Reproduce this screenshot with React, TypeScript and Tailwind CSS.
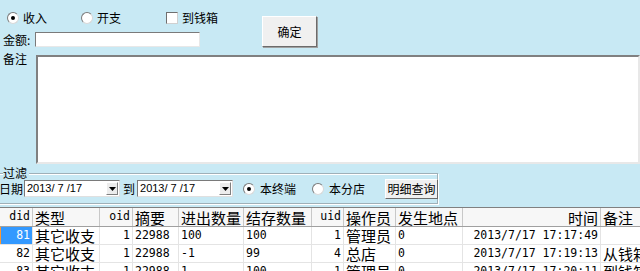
import React from "react";

const CJK = "font-['Noto_Sans_CJK_SC',sans-serif]";
const MONO = "font-['DejaVu_Sans_Mono','Noto_Sans_CJK_SC',monospace]";

function Radio({ checked }: { checked?: boolean }) {
  return (
    <span className="flex h-[12px] w-[12px] shrink-0 items-center justify-center rounded-full border border-t-[#7a7a7a] border-l-[#7a7a7a] border-r-[#d8d8d8] border-b-[#d8d8d8] bg-white">
      {checked && <span className="h-[4px] w-[4px] rounded-full bg-black" />}
    </span>
  );
}

function Check() {
  return (
    <span className="h-[12px] w-[12px] shrink-0 border border-t-[#6f6f6f] border-l-[#6f6f6f] border-r-[#d0d0d0] border-b-[#d0d0d0] bg-white" />
  );
}

function Combo({ value }: { value: string }) {
  return (
    <div className="flex h-[17px] w-[96px] shrink-0 items-center border border-t-[#7a7a7a] border-l-[#7a7a7a] border-r-[#e0e0e0] border-b-[#e0e0e0] bg-white pl-[2px]">
      <span className="flex-1 font-['Liberation_Sans',sans-serif] text-[11px] leading-none text-black">
        {value}
      </span>
      <span className="mr-[1px] flex h-[13px] w-[12px] items-center justify-center border border-t-white border-l-white border-r-[#808080] border-b-[#808080] bg-[#ececec]">
        <svg width="7" height="4" viewBox="0 0 7 4">
          <path d="M0 0h7L3.5 4z" fill="#000" />
        </svg>
      </span>
    </div>
  );
}

const cols = "grid-cols-[33px_67px_33px_46px_65px_68px_32px_52px_67px_138px_60px]";

type Cell = { t: string; right?: boolean; mono?: boolean };

const header: Cell[] = [
  { t: "did", right: true, mono: true },
  { t: "类型" },
  { t: "oid", right: true, mono: true },
  { t: "摘要" },
  { t: "进出数量" },
  { t: "结存数量" },
  { t: "uid", right: true, mono: true },
  { t: "操作员" },
  { t: "发生地点" },
  { t: "时间", right: true },
  { t: "备注" },
];

const rows = [
  ["81", "其它收支", "1", "22988", "100", "100", "1", "管理员", "0", "2013/7/17 17:17:49", ""],
  ["82", "其它收支", "1", "22988", "-1", "99", "4", "总店", "0", "2013/7/17 17:19:13", "从钱箱"],
  ["83", "其它收支", "1", "22988", "1", "100", "1", "管理员", "0", "2013/7/17 17:20:11", "到钱箱"],
];

const monoCol = [true, false, true, true, true, true, true, false, true, true, false];
const rightCol = [true, false, true, false, false, false, true, false, false, true, false];

export default function App() {
  return (
    <div className={`flex h-[271px] w-[640px] flex-col overflow-hidden bg-[#c8e9f4] text-[12px] text-black ${CJK}`}>
      {/* top form */}
      <div className="flex h-[55px] shrink-0 whitespace-nowrap">
        <div className="flex w-[262px] flex-col pt-[11px]">
          <div className="flex h-[14px] items-center">
            <div className="flex w-[81px] items-center gap-[4px] pl-[7px]">
              <Radio checked />
              <span className="leading-none">收入</span>
            </div>
            <div className="flex w-[85px] items-center gap-[4px]">
              <Radio />
              <span className="leading-none">开支</span>
            </div>
            <div className="flex items-center gap-[4px]">
              <Check />
              <span className="leading-none">到钱箱</span>
            </div>
          </div>
          <div className="mt-[7px] flex h-[15px] items-center">
            <span className="w-[35px] pl-[3px] leading-none">金额:</span>
            <div className="h-[15px] w-[165px] border border-t-[#7a7a7a] border-l-[#7a7a7a] border-r-[#e8e8e8] border-b-[#e8e8e8] bg-white" />
          </div>
        </div>
        <button className="mt-[16px] flex h-[31px] w-[55px] items-center justify-center border border-t-white border-l-white border-r-[#6b6b6b] border-b-[#6b6b6b] bg-[#f0f0f0] shadow-[1px_1px_0_#a0a0a0] text-[12px]">
          确定
        </button>
      </div>

      {/* remarks */}
      <div className="flex h-[109px] shrink-0 items-start">
        <span className="-mt-[3px] w-[36px] shrink-0 whitespace-nowrap pl-[3px] leading-[14px]">备注</span>
        <div className="h-full flex-1 border-2 border-t-[#808080] border-l-[#808080] border-r-[#e8e8e8] border-b-[#e8e8e8] bg-white" />
      </div>

      {/* filter group */}
      <div className="relative ml-[-4px] mt-[9px] h-[31px] w-[442px] shrink-0 whitespace-nowrap border border-[#9fb0b8] shadow-[inset_1px_1px_0_#ffffff,1px_1px_0_#ffffff]">
        <span className="absolute -top-[8px] left-[6px] bg-[#c8e9f4] pr-[2px] leading-[14px]">过滤</span>
        <div className="flex h-full items-center pl-[2px]">
          <span className="w-[25px] shrink-0 leading-none">日期</span>
          <Combo value="2013/ 7 /17" />
          <span className="ml-[3px] mr-[2px] shrink-0 leading-none">到</span>
          <Combo value="2013/ 7 /17" />
          <div className="ml-[10px] flex w-[69px] shrink-0 items-center gap-[5px]">
            <Radio checked />
            <span className="leading-none">本终端</span>
          </div>
          <div className="flex shrink-0 items-center gap-[5px]">
            <Radio />
            <span className="leading-none">本分店</span>
          </div>
          <button className="ml-[20px] flex h-[20px] w-[53px] shrink-0 items-center justify-center border border-t-white border-l-white border-r-[#6b6b6b] border-b-[#6b6b6b] bg-[#f0f0f0] text-[12px]">
            明细查询
          </button>
        </div>
      </div>

      {/* data grid */}
      <div className="mt-[3px] flex-1 overflow-hidden border-t border-[#808080] bg-white">
        <div className={`grid h-[19px] ${cols} border-b border-[#a0a0a0] bg-[#f7f7f7]`}>
          {header.map((c, i) => (
            <div
              key={i}
              className={`flex items-center overflow-hidden whitespace-nowrap border-r border-[#c8c8c8] px-[2px] leading-none ${c.right ? "justify-end" : "justify-start"} ${c.mono ? `${MONO} text-[11.5px]` : "text-[15px]"}`}
            >
              {c.t}
            </div>
          ))}
        </div>
        {rows.map((r, ri) => (
          <div key={ri} className={`grid h-[18px] ${cols} border-b border-[#e4e4e4]`}>
            {r.map((v, ci) => {
              const sel = ri === 0 && ci === 0;
              return (
                <div
                  key={ci}
                  className={`flex items-center overflow-hidden whitespace-nowrap border-r border-[#e4e4e4] px-[2px] leading-none ${rightCol[ci] ? "justify-end" : "justify-start"} ${monoCol[ci] ? `${MONO} text-[11.5px]` : "text-[15px]"} ${sel ? "bg-[#3399ff] text-white shadow-[inset_1px_0_0_#ff9933]" : ""}`}
                >
                  {v}
                </div>
              );
            })}
          </div>
        ))}
      </div>
    </div>
  );
}
